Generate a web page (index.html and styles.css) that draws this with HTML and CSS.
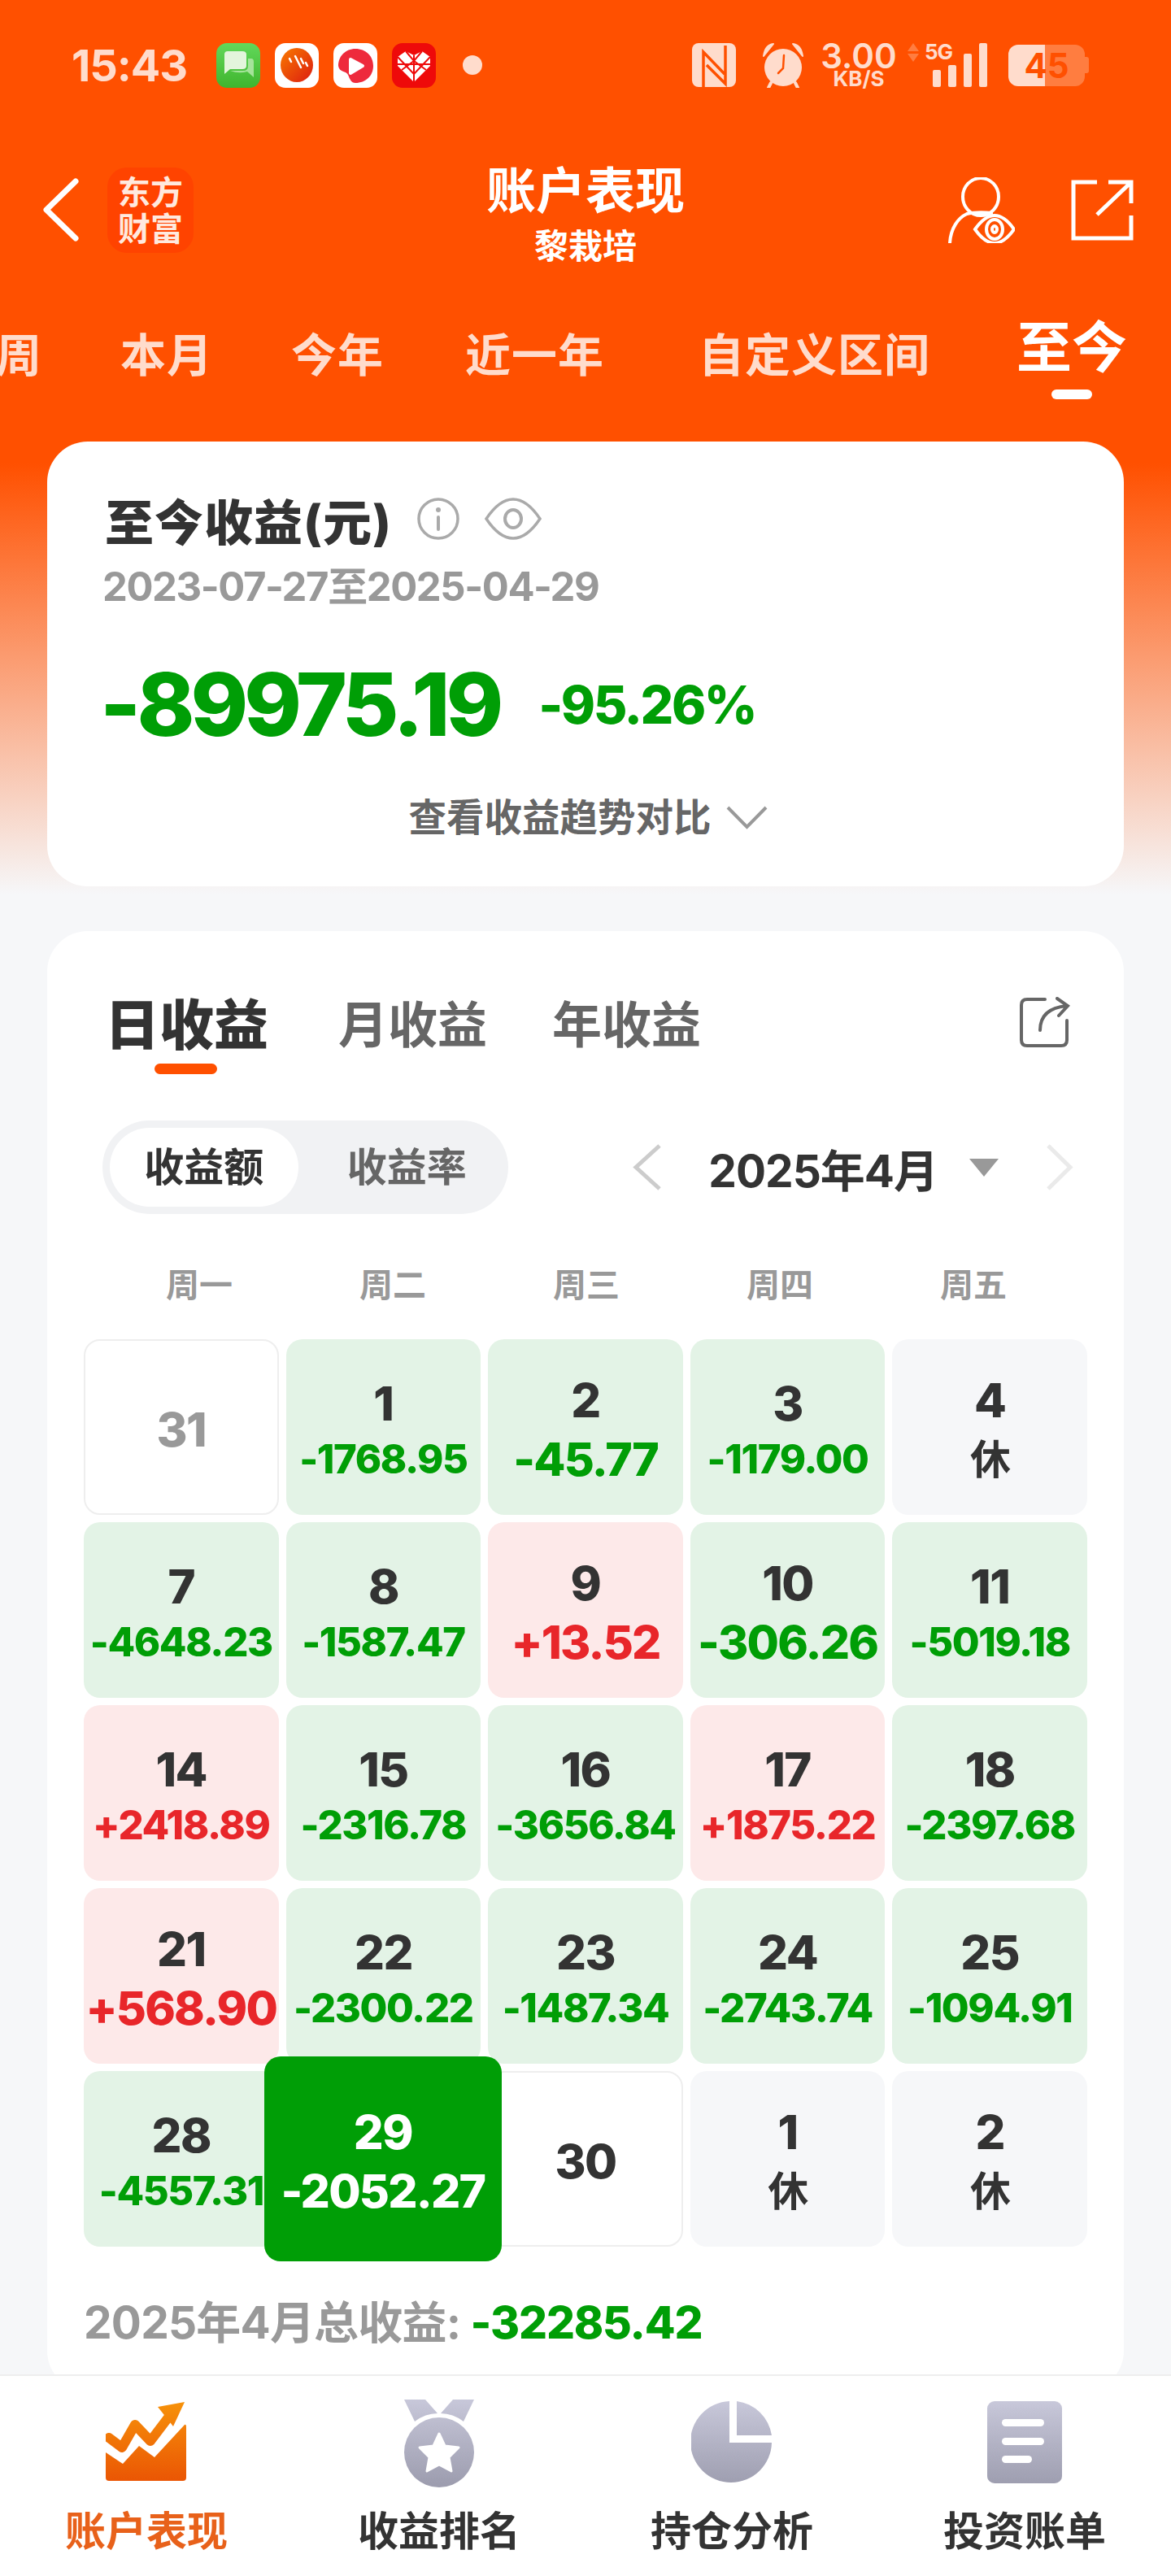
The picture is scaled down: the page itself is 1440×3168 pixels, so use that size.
FILE: index.html
```html
<!DOCTYPE html>
<html lang="zh-CN">
<head>
    <meta charset="UTF-8">
    <title>账户表现</title>
    <link rel="stylesheet" href="styles.css">
</head>
<body>
    <div class="page">
        <div class="scroll">
            <div class="statusbar">
                <span class="time">15:43</span>
                <div class="app-icons">
                    <svg class="app-icon" viewBox="0 0 54 55"><defs><linearGradient id="msgBg" x1="0" y1="0" x2="0" y2="1"><stop offset="0" stop-color="#62d85a"/><stop offset="1" stop-color="#3fb52e"/></linearGradient></defs><rect width="54" height="55" rx="13" fill="url(#msgBg)"/><path d="M10 38 V14 Q10 10 14 10 H32 Q37 10 37 14 V28 Q37 32 32 32 H17 Z" fill="#e3f5dc"/><path d="M17 34 H33 Q39 34 39 28 V19 H43 Q46 19 46 23 V42 L38 35 Q28 38 17 34 Z" fill="#a5e39a"/></svg>
                    <svg class="app-icon" viewBox="0 0 54 55"><defs><linearGradient id="podBg" x1="0" y1="0" x2="1" y2="1"><stop offset="0" stop-color="#f97a00"/><stop offset="1" stop-color="#dc1c10"/></linearGradient></defs><rect width="54" height="55" rx="13" fill="#fff"/><ellipse cx="27" cy="27" rx="20" ry="21" fill="url(#podBg)"/><path d="M18 19 l2 4 M25 16 l7 14 M32 19 l3 6 M38 24 l2 4" stroke="#fff" stroke-width="2.5" stroke-linecap="round"/></svg>
                    <svg class="app-icon" viewBox="0 0 54 55"><rect width="54" height="55" rx="13" fill="#fff"/><path d="M27 7 C40 7 49 16 49 28 C49 40 40 49 27 49 C22 49 20 44 18 39 C16 34 7 36 6 28 C6 16 15 7 27 7 Z" fill="#ee2a3c"/><path d="M21 20 L36 28 L21 37 Z" fill="#fff" stroke="#fff" stroke-width="4" stroke-linejoin="round"/></svg>
                    <svg class="app-icon" viewBox="0 0 54 55"><rect width="54" height="55" rx="13" fill="#ee0a0a"/><path d="M27 48 L7 28 V17 L17 10 L27 15 L37 10 L47 17 V28 Z" fill="#fff"/><path d="M7 17 L27 38 M47 17 L27 38 M17 10 L27 22 L37 10 M12 33 L27 22 L42 33 M27 15 V48 M7 26 H47" stroke="#ee0a0a" stroke-width="2" fill="none"/></svg>
                </div>
                <span class="dot"></span>
                <div class="status-right">
                    <svg class="nfc" viewBox="0 0 54 54"><rect width="54" height="54" rx="8" fill="#ffdccc"/><path d="M14 54 V11 L40 38 M18 27 L41 50 V3" stroke="#ff5000" stroke-width="3.5" fill="none"/></svg>
                    <svg class="alarm" viewBox="0 0 54 56"><circle cx="27" cy="31" r="23" fill="#ffdccc"/><path d="M3 17 Q5 3 15 2 Z M51 17 Q49 3 39 2 Z" fill="#ffdccc" stroke="#ffdccc" stroke-width="2" stroke-linejoin="round"/><path d="M12 50 L9 56 M42 50 L45 56" stroke="#ffdccc" stroke-width="4" stroke-linecap="round"/><path d="M28 16 L27 32 L21 38" stroke="#ff5000" stroke-width="2.5" fill="none" stroke-linecap="round"/></svg>
                    <div class="speed">
                        <span class="speed-num">3.00</span>
                        <span class="speed-unit">KB/S</span>
                    </div>
                    <svg class="updown" viewBox="0 0 16 23"><path d="M8 0 L15 10 H1 Z M8 23 L1 13 H15 Z" fill="#ff7d40"/></svg>
                    <div class="signal">
                        <span class="five-g">5G</span>
                        <svg class="bars" viewBox="0 0 68 54"><rect y="33" width="10" height="21" rx="2" fill="#ffdccc"/><rect x="19" y="27" width="10" height="27" rx="2" fill="#ffdccc"/><rect x="38" y="13" width="10" height="41" rx="2" fill="#ffdccc"/><rect x="57" width="10" height="54" rx="2" fill="#ffdccc"/></svg>
                    </div>
                    <div class="battery">
                        <div class="battery-body"><span class="battery-num">45</span></div>
                        <span class="battery-nub"></span>
                    </div>
                </div>
            </div>

            <div class="nav">
                <div class="nav-left">
                    <svg class="back" viewBox="0 0 44 78"><path d="M40 4 L4 39 L40 74" fill="none" stroke="#fff" stroke-width="7" stroke-linecap="round" stroke-linejoin="round"/></svg>
                    <div class="logo">东方<br>财富</div>
                </div>
                <div class="nav-title">
                    <h1>账户表现</h1>
                    <p>黎栽培</p>
                </div>
                <div class="nav-right">
                    <svg class="person" viewBox="0 0 83 81"><g fill="none" stroke="#fff" stroke-width="4"><ellipse cx="41" cy="24" rx="22" ry="23"/><path d="M3 81 C4 63 13 50 24 45 C32 43 44 43 56 44"/><path d="M34 64 Q46 47 58 47 Q70 47 82 64 Q70 81 58 81 Q46 81 34 64 Z"/><ellipse cx="58" cy="64" rx="10" ry="12"/><ellipse cx="58" cy="64" rx="3" ry="4"/></g></svg>
                    <svg class="share" viewBox="0 0 77 75"><path d="M32 3 H3 V72 H74 V44 M32 43 L74 3 M46 3 H74 V29" fill="none" stroke="#fff" stroke-width="5"/></svg>
                </div>
            </div>

            <div class="range-tabs">
                <span class="range-tab range-first">周</span>
                <span class="range-tab">本月</span>
                <span class="range-tab">今年</span>
                <span class="range-tab range-long">近一年</span>
                <span class="range-tab range-custom">自定义区间</span>
                <div class="range-active">
                    <span>至今</span>
                    <i></i>
                </div>
            </div>

            <div class="card summary">
                <div class="summary-title">
                    <h2>至今收益(元)</h2>
                    <svg class="info" viewBox="0 0 54 54"><circle cx="27" cy="27" r="24" fill="none" stroke="#aaa" stroke-width="3.5"/><circle cx="27" cy="16" r="3" fill="#aaa"/><path d="M27 25 V40" stroke="#aaa" stroke-width="4" stroke-linecap="round"/></svg>
                    <svg class="eye" viewBox="0 0 70 52"><path d="M2 26 Q18 2 35 2 Q52 2 68 26 Q52 50 35 50 Q18 50 2 26 Z" fill="none" stroke="#aaa" stroke-width="3.5"/><ellipse cx="35" cy="26" rx="10" ry="11" fill="none" stroke="#aaa" stroke-width="4"/></svg>
                </div>
                <div class="summary-date">2023-07-27至2025-04-29</div>
                <div class="summary-nums">
                    <span class="big-num">-89975.19</span>
                    <span class="big-rate">-95.26%</span>
                </div>
                <div class="summary-more">
                    <span>查看收益趋势对比</span>
                    <svg class="more-arrow" viewBox="0 0 51 29"><path d="M2 2 L25.5 26 L49 2" fill="none" stroke="#999" stroke-width="4"/></svg>
                </div>
            </div>

            <div class="card calendar">
                <div class="period-tabs">
                    <div class="period-active">
                        <span>日收益</span>
                        <i></i>
                    </div>
                    <span class="period-tab">月收益</span>
                    <span class="period-tab">年收益</span>
                    <svg class="period-share" viewBox="0 0 62 62"><path d="M31 3 H9 Q2 3 2 10 V53 Q2 60 9 60 H51 Q58 60 58 53 V29 M25 41 Q25 14 58 11 M46 2 L59 11 L48 23" fill="none" stroke="#666" stroke-width="4" stroke-linecap="round"/></svg>
                </div>

                <div class="filter-row">
                    <div class="toggle">
                        <span class="toggle-item toggle-on">收益额</span>
                        <span class="toggle-item">收益率</span>
                    </div>
                    <div class="month-picker">
                        <svg class="month-prev" viewBox="0 0 35 57"><path d="M33 2 L4 28.5 L33 55" fill="none" stroke="#ccc" stroke-width="5"/></svg>
                        <span class="month-text">2025年4月</span>
                        <span class="month-tri"></span>
                        <svg class="month-next" viewBox="0 0 33 57"><path d="M2 2 L29 28.5 L2 55" fill="none" stroke="#eaeaea" stroke-width="5"/></svg>
                    </div>
                </div>

                <div class="weekdays">
                    <span>周一</span><span>周二</span><span>周三</span><span>周四</span><span>周五</span>
                </div>

                <div class="days">
                    <div class="day day-empty"><b class="muted">31</b></div>
                    <div class="day day-down"><b>1</b><span class="val">-1768.95</span></div>
                    <div class="day day-down"><b>2</b><span class="val val-lg">-45.77</span></div>
                    <div class="day day-down"><b>3</b><span class="val">-1179.00</span></div>
                    <div class="day day-rest"><b>4</b><span class="val val-rest">休</span></div>

                    <div class="day day-down"><b>7</b><span class="val">-4648.23</span></div>
                    <div class="day day-down"><b>8</b><span class="val">-1587.47</span></div>
                    <div class="day day-up"><b>9</b><span class="val val-lg">+13.52</span></div>
                    <div class="day day-down"><b>10</b><span class="val val-lg">-306.26</span></div>
                    <div class="day day-down"><b>11</b><span class="val">-5019.18</span></div>

                    <div class="day day-up"><b>14</b><span class="val">+2418.89</span></div>
                    <div class="day day-down"><b>15</b><span class="val">-2316.78</span></div>
                    <div class="day day-down"><b>16</b><span class="val">-3656.84</span></div>
                    <div class="day day-up"><b>17</b><span class="val">+1875.22</span></div>
                    <div class="day day-down"><b>18</b><span class="val">-2397.68</span></div>

                    <div class="day day-up"><b>21</b><span class="val val-lg">+568.90</span></div>
                    <div class="day day-down"><b>22</b><span class="val">-2300.22</span></div>
                    <div class="day day-down"><b>23</b><span class="val">-1487.34</span></div>
                    <div class="day day-down"><b>24</b><span class="val">-2743.74</span></div>
                    <div class="day day-down"><b>25</b><span class="val">-1094.91</span></div>

                    <div class="day day-down"><b>28</b><span class="val">-4557.31</span></div>
                    <div class="day day-picked"><b>29</b><span class="val val-lg">-2052.27</span></div>
                    <div class="day day-empty"><b>30</b></div>
                    <div class="day day-rest"><b>1</b><span class="val val-rest">休</span></div>
                    <div class="day day-rest"><b>2</b><span class="val val-rest">休</span></div>
                </div>

                <div class="month-total">2025年4月总收益: <em>-32285.42</em></div>
            </div>
        </div>

        <div class="tabbar">
            <div class="tabbar-item tabbar-on">
                <svg class="tabbar-icon" viewBox="0 0 100 105"><defs><linearGradient id="orangeGrad" gradientUnits="userSpaceOnUse" x1="0" y1="0" x2="0" y2="100"><stop offset="0" stop-color="#f7930a"/><stop offset="1" stop-color="#ea5504"/></linearGradient></defs><path d="M0 64 L21 78 L41 56 L60 70 L97 30 Q99 29 99 33 V95 Q99 99 95 99 H4 Q0 99 0 95 Z" fill="url(#orangeGrad)"/><path d="M4 46 L20 58 L36 30 L55 50 L80 17" fill="none" stroke="url(#orangeGrad)" stroke-width="12" stroke-linejoin="round" stroke-linecap="round"/><path d="M64 8 L97 2 L83 32 Z" fill="url(#orangeGrad)"/></svg>
                <span>账户表现</span>
            </div>
            <div class="tabbar-item">
                <svg class="tabbar-icon" viewBox="0 0 100 109"><defs><linearGradient id="grayGrad" gradientUnits="userSpaceOnUse" x1="0" y1="0" x2="0" y2="105"><stop offset="0" stop-color="#c8c8da"/><stop offset="1" stop-color="#9d9daf"/></linearGradient></defs><path d="M7 1 H33 L48 18 Q33 18 20 28 Z M93 1 H67 L52 18 Q67 18 80 28 Z" fill="url(#grayGrad)"/><circle cx="50" cy="66" r="43" fill="url(#grayGrad)"/><path d="M50 43 L57 58 L74 60 L62 72 L65 89 L50 81 L35 89 L38 72 L26 60 L43 58 Z" fill="#fff" stroke="#fff" stroke-width="3" stroke-linejoin="round"/></svg>
                <span>收益排名</span>
            </div>
            <div class="tabbar-item">
                <svg class="tabbar-icon" viewBox="0 0 100 105"><path d="M47 1 V52 H99 A50 50 0 1 1 47 1 Z M56 1 A50 50 0 0 1 99 43 H56 Z" fill="url(#grayGrad)"/></svg>
                <span>持仓分析</span>
            </div>
            <div class="tabbar-item">
                <svg class="tabbar-icon" viewBox="0 0 100 105"><rect x="4" y="1" width="92" height="101" rx="9" fill="url(#grayGrad)"/><rect x="22" y="23" width="52" height="9" rx="4.5" fill="#fff"/><rect x="22" y="46" width="52" height="9" rx="4.5" fill="#fff"/><rect x="22" y="68" width="37" height="9" rx="4.5" fill="#fff"/></svg>
                <span>投资账单</span>
            </div>
        </div>
    </div>
</body>
</html>
```

FILE: styles.css
```css
* {
    margin: 0;
    padding: 0;
    box-sizing: border-box;
}

body {
    font-family: Inter, "Noto Sans CJK SC", sans-serif;
    color: #333;
    background: #f6f7f9;
}

.page {
    width: 1440px;
    height: 3168px;
    display: flex;
    flex-direction: column;
    overflow: hidden;
}

.scroll {
    flex: 1;
    overflow: hidden;
    background: linear-gradient(#ff5000 0, #ff5000 570px, #f6f7f9 1100px);
}

/* status bar */
.statusbar {
    height: 160px;
    display: flex;
    align-items: center;
    padding-left: 88px;
    color: #ffdccc;
}

.time {
    width: 178px;
    font-size: 54px;
    font-weight: 700;
    letter-spacing: -1px;
}

.app-icons {
    display: flex;
    gap: 18px;
}

.app-icon {
    width: 54px;
    height: 55px;
}

.dot {
    width: 24px;
    height: 24px;
    margin-left: 33px;
    border-radius: 50%;
    background: #ffdccc;
}

.status-right {
    display: flex;
    align-items: center;
    margin-left: 258px;
}

.nfc {
    width: 54px;
    height: 54px;
}

.alarm {
    width: 54px;
    height: 56px;
    margin-left: 31px;
}

.speed {
    display: flex;
    flex-direction: column;
    align-items: center;
    width: 90px;
    margin-left: 21px;
}

.speed-num {
    font-size: 42px;
    font-weight: 600;
    line-height: 34px;
}

.speed-unit {
    font-size: 26px;
    font-weight: 700;
    line-height: 22px;
}

.updown {
    width: 16px;
    height: 23px;
    margin: 0 0 32px 14px;
}

.signal {
    position: relative;
    width: 78px;
    height: 54px;
    margin-left: 6px;
}

.five-g {
    position: absolute;
    left: 0;
    top: -3px;
    font-size: 26px;
    font-weight: 700;
    letter-spacing: -1px;
    line-height: 28px;
}

.bars {
    position: absolute;
    right: 0;
    bottom: 0;
    width: 68px;
    height: 54px;
}

.battery {
    display: flex;
    align-items: center;
    margin-left: 25px;
}

.battery-body {
    width: 94px;
    height: 51px;
    border-radius: 12px;
    background: linear-gradient(90deg, #ffdccc 48%, #ff7d40 48%);
    display: flex;
    align-items: center;
    justify-content: center;
}

.battery-num {
    color: #ff5000;
    font-size: 42px;
    font-weight: 700;
}

.battery-nub {
    width: 5px;
    height: 20px;
    border-radius: 0 3px 3px 0;
    background: #ff7d40;
}

/* nav */
.nav {
    height: 196px;
    display: flex;
    align-items: center;
    justify-content: space-between;
    padding: 0 46px 0 53px;
    position: relative;
}

.nav-left {
    display: flex;
    align-items: center;
    gap: 35px;
}

.back {
    width: 44px;
    height: 78px;
}

.logo {
    width: 106px;
    height: 105px;
    padding-top: 8px;
    border-radius: 24px;
    background: #ff4300;
    color: #ffe9de;
    font-size: 40px;
    font-weight: 700;
    line-height: 45px;
    text-align: center;
}

.nav-title {
    position: absolute;
    left: 0;
    right: 0;
    top: 34px;
    text-align: center;
    color: #fff;
}

.nav-title h1 {
    font-size: 61px;
    font-weight: 700;
    line-height: 82px;
}

.nav-title p {
    font-size: 42px;
    font-weight: 700;
    line-height: 54px;
}

.nav-right {
    display: flex;
    align-items: center;
    gap: 69px;
}

.person {
    width: 83px;
    height: 81px;
}

.share {
    width: 77px;
    height: 75px;
}

/* range tabs */
.range-tabs {
    height: 187px;
    padding-top: 40px;
    display: flex;
    align-items: flex-start;
    gap: 96px;
    overflow: hidden;
    white-space: nowrap;
}

.range-tab {
    color: #ffdccc;
    font-size: 56px;
    font-weight: 600;
    line-height: 82px;
    letter-spacing: 1px;
}

.range-first {
    margin-left: -5px;
}

.range-long {
    margin-left: 4px;
}

.range-custom {
    margin-left: 20px;
}

.range-active {
    display: flex;
    flex-direction: column;
    align-items: center;
    margin-left: 10px;
    color: #fff;
    font-size: 68px;
    font-weight: 700;
    line-height: 62px;
}

.range-active i {
    display: block;
    width: 50px;
    height: 12px;
    margin-top: 21px;
    border-radius: 6px;
    background: #fff;
}

/* cards */
.card {
    margin: 0 58px;
    border-radius: 50px;
    background: #fff;
}

.summary {
    height: 547px;
    padding: 60px 71px 0;
}

.summary-title {
    display: flex;
    align-items: center;
    height: 70px;
}

.summary-title h2 {
    font-size: 60px;
    font-weight: 800;
    letter-spacing: 1px;
}

.info {
    width: 54px;
    height: 54px;
    margin-left: 30px;
}

.eye {
    width: 70px;
    height: 52px;
    margin-left: 30px;
}

.summary-date {
    margin: 21px 0 0 -3px;
    color: #999;
    font-size: 49px;
    font-weight: 700;
    line-height: 56px;
    letter-spacing: -1.4px;
}

.summary-nums {
    display: flex;
    align-items: center;
    height: 120px;
    margin: 56px 0 0 -6px;
}

.big-num {
    color: #009e06;
    font-size: 107px;
    font-weight: 800;
    letter-spacing: -5px;
}

.big-rate {
    margin-left: 48px;
    color: #009e06;
    font-size: 64px;
    font-weight: 800;
    letter-spacing: -2.5px;
}

.summary-more {
    display: flex;
    align-items: center;
    justify-content: center;
    gap: 18px;
    margin: 49px 0 0 6px;
    color: #666;
    font-size: 46.5px;
    font-weight: 700;
    line-height: 60px;
}

.more-arrow {
    width: 51px;
    height: 29px;
}

/* calendar card */
.calendar {
    height: 1796px;
    margin-top: 55px;
    padding-top: 81px;
}

.period-tabs {
    display: flex;
    align-items: flex-start;
    height: 95px;
    padding: 0 66px 0 71px;
    color: #666;
}

.period-active {
    display: flex;
    flex-direction: column;
    align-items: center;
    color: #333;
    font-size: 67px;
    font-weight: 800;
    line-height: 70px;
}

.period-active i {
    display: block;
    width: 77px;
    height: 13px;
    margin: 12px 0 0 -2px;
    border-radius: 7px;
    background: #ff5000;
}

.period-tab {
    margin-left: 80px;
    font-size: 61px;
    font-weight: 700;
    line-height: 70px;
}

.period-active + .period-tab {
    margin-left: 86px;
}

.period-share {
    width: 62px;
    height: 62px;
    margin-left: auto;
}

.filter-row {
    display: flex;
    align-items: center;
    height: 115px;
    margin-top: 57px;
    padding: 0 62px 0 68px;
}

.toggle {
    display: flex;
    width: 499px;
    height: 115px;
    padding: 9px;
    border-radius: 58px;
    background: #f1f2f4;
}

.toggle-item {
    width: 232px;
    border-radius: 49px;
    color: #666;
    font-size: 49px;
    font-weight: 700;
    line-height: 97px;
    text-align: center;
}

.toggle-item + .toggle-item {
    margin-left: 18px;
}

.toggle-on {
    background: #fff;
    color: #333;
}

.month-picker {
    display: flex;
    align-items: center;
    margin-left: auto;
}

.month-prev {
    width: 35px;
    height: 57px;
}

.month-text {
    margin-left: 58px;
    font-size: 55px;
    font-weight: 700;
    letter-spacing: -1px;
}

.month-tri {
    margin-left: 39px;
    width: 0;
    height: 0;
    border-left: 18px solid transparent;
    border-right: 18px solid transparent;
    border-top: 22px solid #999;
}

.month-next {
    width: 33px;
    height: 57px;
    margin-left: 59px;
}

.weekdays {
    display: grid;
    grid-template-columns: repeat(5, 238px);
    height: 50px;
    margin: 62px 0 0 68px;
    color: #999;
    font-size: 41px;
    font-weight: 600;
    line-height: 50px;
    text-align: center;
}

.days {
    display: grid;
    grid-template-columns: repeat(5, 1fr);
    grid-auto-rows: 216px;
    gap: 9px;
    margin: 42px 45px 0;
}

.day {
    display: flex;
    flex-direction: column;
    align-items: center;
    justify-content: center;
    border-radius: 20px;
    white-space: nowrap;
}

.day b {
    font-size: 58px;
    font-weight: 800;
    line-height: 80px;
    letter-spacing: -1.5px;
}

.day-empty b {
    margin-top: 6px;
}

.day .muted {
    color: #999;
}

.val {
    font-size: 49px;
    font-weight: 800;
    line-height: 58px;
    letter-spacing: -1.4px;
}

.val-lg {
    font-size: 57px;
    line-height: 66px;
    letter-spacing: -1.8px;
}

.val-rest {
    font-size: 50px;
    font-weight: 700;
    line-height: 66px;
}

.day-empty {
    border: 2px solid #eee;
    background: #fff;
}

.day-down {
    background: #e3f3e6;
    color: #333;
}

.day-down .val {
    color: #009e06;
}

.day-up {
    background: #fde9e9;
}

.day-up .val {
    color: #e8262a;
}

.day-rest {
    background: #f6f7f9;
}

/* selected day sits above its neighbours */
.day-picked {
    z-index: 1;
    margin: -18px -26px -18px -27px;
    background: #009e06;
    color: #fff;
}

.month-total {
    margin: 58px 0 0 45px;
    color: #999;
    font-size: 55px;
    font-weight: 700;
    line-height: 70px;
    letter-spacing: -0.8px;
}

.month-total em {
    color: #009e06;
    font-style: normal;
    font-weight: 800;
    letter-spacing: -1.2px;
}

/* bottom tabs */
.tabbar {
    flex: none;
    height: 248px;
    display: grid;
    grid-template-columns: repeat(4, 1fr);
    border-top: 2px solid #eee;
    background: #fff;
    position: relative;
    z-index: 2;
}

.tabbar-item {
    display: flex;
    flex-direction: column;
    align-items: center;
    padding-top: 28px;
    font-size: 50px;
    font-weight: 700;
    line-height: 60px;
}

.tabbar-icon {
    width: 100px;
    height: 109px;
    margin-bottom: 24px;
}

.tabbar-on {
    color: #e8611a;
}
```
